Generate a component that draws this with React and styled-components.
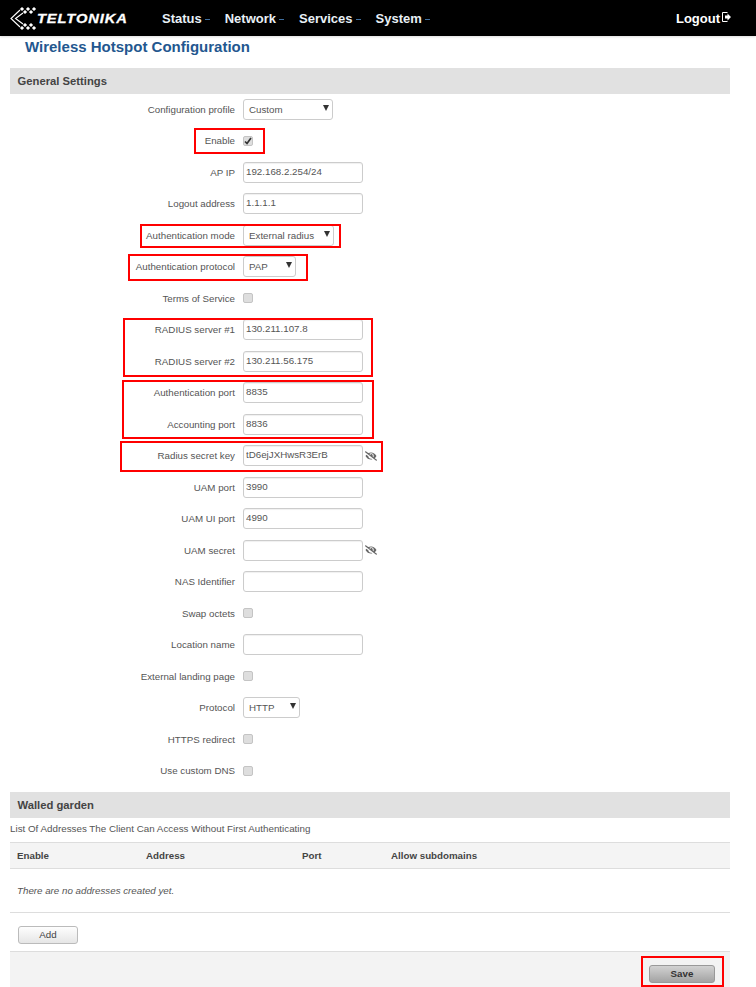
import React from "react";
import styled, { createGlobalStyle } from "styled-components";
import { FaEyeSlash } from "react-icons/fa";

const GlobalStyle = createGlobalStyle`
    html, body {
        margin: 0;
        padding: 0;
        background: #fff;
        font-family: "Liberation Sans", Arial, sans-serif;
        color: #555;
    }
`
const Page = styled.div`
    width: 756px;
    height: 987px;
    overflow: hidden;
    display: flex;
    flex-direction: column;
`
const Navbar = styled.header`
    height: 36px;
    flex: none;
    background: #000;
    display: flex;
    align-items: center;
    padding: 0 26px 0 10px;
    box-shadow: 0 1px 2px #00000022;
`
const Brand = styled.div`
    width: 152px;
    flex: none;
    display: flex;
    align-items: center;
`
const BrandText = styled.span`
    display: inline-block;
    margin-top: 1px;
    color: #fff;
    font-size: 13.5px;
    font-weight: bold;
    font-style: italic;
    letter-spacing: 0.8px;
    transform: scaleX(1.09);
    transform-origin: left center;
    -webkit-text-stroke: 0.3px #fff;
`
const NavLinks = styled.nav`
    display: flex;
    gap: 15px;
    flex-grow: 1;
`
const NavLink = styled.a`
    color: #e8f0f6;
    font-size: 13px;
    font-weight: bold;
    display: flex;
    align-items: center;
    &::after {
        content: "";
        margin: 2px 0 0 3px;
        width: 5px;
        height: 1px;
        background: #3f6f9f;
    }
`
const Logout = styled.a`
    color: #fff;
    font-size: 13px;
    font-weight: bold;
    display: flex;
    align-items: center;
    gap: 2px;
    margin-right: -1px;
    svg {
        margin-top: -3px;
    }
`
const Title = styled.h2`
    flex: none;
    margin: 3px 0 0 25px;
    height: 29px;
    color: #23578f;
    font-size: 15px;
    line-height: 16px;
    font-weight: bold;
`
const Content = styled.main`
    flex: none;
    width: 720px;
    margin-left: 10px;
`
const SectionHead = styled.h3`
    margin: 0;
    height: 26px;
    padding-left: 7.5px;
    background: #e1e1e1;
    color: #444;
    font-size: 11.25px;
    font-weight: bold;
    line-height: 26px;
`
const Rows = styled.div`
    margin-top: -0.5px;
    margin-bottom: 5.5px;
`
const Row = styled.div`
    height: 31.5px;
    display: flex;
    align-items: center;
    gap: 8px;
`
const Label = styled.label`
    width: 225px;
    flex: none;
    text-align: right;
    font-size: 9.75px;
    color: #555;
`
const Group = styled.div`
    position: relative;
`
const Mark = styled.div`
    position: absolute;
    box-sizing: border-box;
    border: 2px solid #f00;
    left: ${p => p.$left}px;
    width: ${p => p.$width}px;
    top: ${p => p.$top}px;
    height: ${p => p.$height}px;
    pointer-events: none;
`
const TextInput = styled.input`
    box-sizing: border-box;
    width: 120px;
    height: 21px;
    margin: 0;
    padding: 0 2px 2px;
    border: 1px solid #ccc;
    border-radius: 3px;
    background: #fff;
    box-shadow: inset 0 1px 1px #00000010;
    font: 9.75px "Liberation Sans", Arial, sans-serif;
    color: #555;
    outline: none;
`
const SelectBox = styled.div`
    box-sizing: border-box;
    width: ${p => p.$width}px;
    height: 21px;
    padding: 0 5px;
    border: 1px solid #ccc;
    border-radius: 3px;
    background: #fff;
    display: flex;
    align-items: center;
    font-size: 9.75px;
    color: #555;
    position: relative;
    &::after {
        content: "";
        position: absolute;
        right: 3px;
        top: 5px;
        border-left: 3.5px solid transparent;
        border-right: 3.5px solid transparent;
        border-top: 6px solid #333;
    }
`
const CheckBox = styled.span`
    box-sizing: border-box;
    width: 10px;
    height: 10px;
    border: 1px solid #c4c4c4;
    border-radius: 2px;
    background: #dedede;
    display: flex;
    align-items: center;
    justify-content: center;
`
const EyeIcon = styled(FaEyeSlash)`
    width: 12px;
    height: 12px;
    margin-left: -6px;
    color: #666;
`
const Note = styled.p`
    margin: 0;
    height: 24px;
    font-size: 9.8px;
    line-height: 21px;
    color: #555;
`
const TableHead = styled.div`
    height: 25px;
    border-top: 1px solid #ddd;
    border-bottom: 1px solid #ddd;
    background: #f4f4f4;
    display: grid;
    grid-template-columns: 129px 156px 89px 1fr;
    align-items: center;
    padding-left: 7px;
    font-size: 9.75px;
    font-weight: bold;
    color: #444;
`
const EmptyRow = styled.div`
    height: 43px;
    border-bottom: 1px solid #ddd;
    padding-left: 7px;
    display: flex;
    align-items: center;
    font-size: 9.75px;
    font-style: italic;
    color: #555;
`
const AddBar = styled.div`
    box-sizing: border-box;
    height: 38px;
    padding: 5px 0 0 8px;
    display: flex;
    align-items: center;
`
const Button = styled.button`
    width: 60px;
    height: 18px;
    padding: 0;
    border: 1px solid #bbb;
    border-radius: 3px;
    background: linear-gradient(#fefefe, #e6e6e6);
    font: 9.75px "Liberation Sans", Arial, sans-serif;
    color: #444;
`
const Footer = styled.footer`
    height: 35px;
    border-top: 1px solid #ddd;
    background: #f3f3f3;
    display: flex;
    align-items: center;
    justify-content: flex-end;
    padding-right: 15px;
    position: relative;
`
const SaveButton = styled(Button)`
    width: 66px;
    margin-top: 8px;
    border-color: #999;
    background: linear-gradient(#d2d2d2, #a3a3a3);
    font-weight: bold;
    color: #333;
`

const LOGO_DOTS = [
    [12, 4], [18, 4], [24, 4], [15, 7], [21, 7],
    [15, 20], [21, 20], [12, 23], [18, 23], [24, 23],
]

const Logo = () => (
    <svg width="27" height="27" viewBox="0 0 27 27" fill="#fff">
        <path d="M10 5 L1 13.5 L10 22" fill="none" stroke="#fff" strokeWidth="1.1" />
        <path d="M13 8 L5.5 13.5 L13 19" fill="none" stroke="#fff" strokeWidth="1.1" />
        {LOGO_DOTS.map(([x, y]) => (
            <path key={`${x}-${y}`} d={`M${x} ${y - 2.1} L${x + 2.1} ${y} L${x} ${y + 2.1} L${x - 2.1} ${y} Z`} />
        ))}
    </svg>
)

const LogoutIcon = () => (
    <svg width="9" height="10" viewBox="0 0 9 10" fill="none">
        <path d="M5.5 0.5 H0.5 V9.5 H5.5" stroke="#fff" />
        <path d="M3 3.5 H5.5 V1.5 L9 5 L5.5 8.5 V6.5 H3 Z" fill="#fff" />
    </svg>
)

const Check = () => (
    <svg width="8" height="8" viewBox="0 0 8 8" fill="none">
        <path d="M1 4.5 L3 6.5 L7 1" stroke="#333" strokeWidth="1.7" />
    </svg>
)

const Field = ({ label, value = "", eye }) => (
    <Row>
        <Label>{label}</Label>
        <TextInput defaultValue={value} />
        {eye && <EyeIcon />}
    </Row>
)
const Choice = ({ label, value, width }) => (
    <Row>
        <Label>{label}</Label>
        <SelectBox $width={width}>{value}</SelectBox>
    </Row>
)
const Toggle = ({ label, checked }) => (
    <Row>
        <Label>{label}</Label>
        <CheckBox>{checked && <Check />}</CheckBox>
    </Row>
)

export default function App() {
    return (
        <Page>
            <GlobalStyle />
            <Navbar>
                <Brand><Logo /><BrandText>TELTONIKA</BrandText></Brand>
                <NavLinks>
                    <NavLink>Status</NavLink>
                    <NavLink>Network</NavLink>
                    <NavLink>Services</NavLink>
                    <NavLink>System</NavLink>
                </NavLinks>
                <Logout>Logout<LogoutIcon /></Logout>
            </Navbar>
            <Title>Wireless Hotspot Configuration</Title>
            <Content>
                <SectionHead>General Settings</SectionHead>
                <Rows>
                    <Choice label="Configuration profile" value="Custom" width={90} />
                    <Group>
                        <Toggle label="Enable" checked />
                        <Mark $left={184} $width={71} $top={3} $height={26} />
                    </Group>
                    <Field label="AP IP" value="192.168.2.254/24" />
                    <Field label="Logout address" value="1.1.1.1" />
                    <Group>
                        <Choice label="Authentication mode" value="External radius" width={91} />
                        <Mark $left={130} $width={201} $top={4.5} $height={24} />
                    </Group>
                    <Group>
                        <Choice label="Authentication protocol" value="PAP" width={53} />
                        <Mark $left={118} $width={180} $top={3} $height={27} />
                    </Group>
                    <Toggle label="Terms of Service" />
                    <Group>
                        <Field label="RADIUS server #1" value="130.211.107.8" />
                        <Field label="RADIUS server #2" value="130.211.56.175" />
                        <Mark $left={113} $width={250} $top={4} $height={59} />
                    </Group>
                    <Group>
                        <Field label="Authentication port" value="8835" />
                        <Field label="Accounting port" value="8836" />
                        <Mark $left={112} $width={252} $top={3} $height={59} />
                    </Group>
                    <Group>
                        <Field label="Radius secret key" value="tD6ejJXHwsR3ErB" eye />
                        <Mark $left={110} $width={263} $top={1} $height={31} />
                    </Group>
                    <Field label="UAM port" value="3990" />
                    <Field label="UAM UI port" value="4990" />
                    <Field label="UAM secret" eye />
                    <Field label="NAS Identifier" />
                    <Toggle label="Swap octets" />
                    <Field label="Location name" />
                    <Toggle label="External landing page" />
                    <Choice label="Protocol" value="HTTP" width={57} />
                    <Toggle label="HTTPS redirect" />
                    <Toggle label="Use custom DNS" />
                </Rows>
                <SectionHead>Walled garden</SectionHead>
                <Note>List Of Addresses The Client Can Access Without First Authenticating</Note>
                <TableHead>
                    <span>Enable</span>
                    <span>Address</span>
                    <span>Port</span>
                    <span>Allow subdomains</span>
                </TableHead>
                <EmptyRow>There are no addresses created yet.</EmptyRow>
                <AddBar><Button>Add</Button></AddBar>
                <Footer>
                    <SaveButton>Save</SaveButton>
                    <Mark $left={631} $width={83} $top={4} $height={31} />
                </Footer>
            </Content>
        </Page>
    );
}
